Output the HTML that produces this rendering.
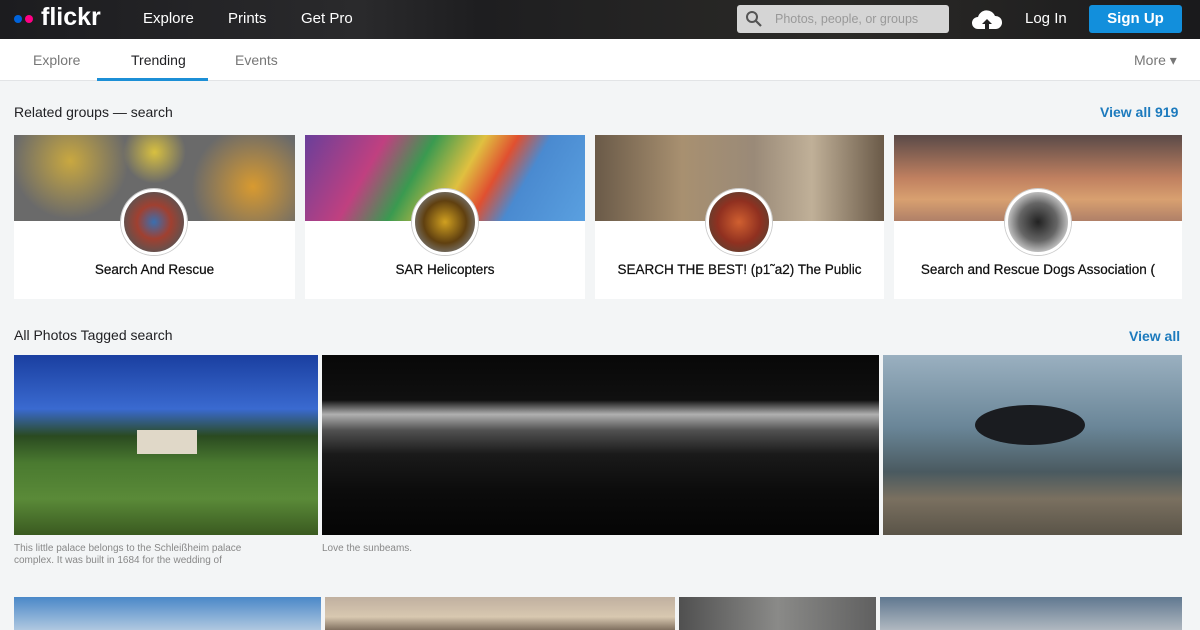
<!DOCTYPE html>
<html><head><meta charset="utf-8"><style>
*{margin:0;padding:0;box-sizing:border-box}
body{width:1200px;height:630px;overflow:hidden;background:#f3f5f6;font-family:"Liberation Sans",sans-serif;position:relative}
.a{position:absolute}
.hdr{left:0;top:0;width:1200px;height:39px;background:linear-gradient(90deg,#1c1c1f 0%,#2a2a2c 30%,#1e1e20 40%,#2b2a27 70%,#1a1a1c 100%)}
.hl{color:#fff;font-size:15px;top:10px}
.sub{left:0;top:39px;width:1200px;height:42px;background:#fff;border-bottom:1px solid #e2e4e6}
.st{font-size:14px;color:#777;top:52px}
.card{top:135px;height:164px;background:#fff}
.card .im{position:absolute;left:0;top:0;right:0;height:86px}
.av{position:absolute;top:54px;width:66px;height:66px;border-radius:50%;border:3px solid #fff;box-shadow:0 0 0 1px #ccc}
.ct{position:absolute;top:127px;left:0;right:0;text-align:center;font-size:13.5px;color:#111;white-space:nowrap;overflow:hidden;-webkit-text-stroke:0.25px #111}
.h2{font-size:14px;color:#212124}
.va{font-size:14px;color:#1c7abd;font-weight:bold}
.cap{font-size:10px;color:#888;line-height:12px}
</style></head><body>
<div class="a hdr"></div>
<div class="a" style="left:14px;top:15px;width:8px;height:8px;border-radius:50%;background:#0063dc"></div>
<div class="a" style="left:25px;top:15px;width:8px;height:8px;border-radius:50%;background:#ff0084"></div>
<div class="a" style="left:41px;top:3px;color:#fff;font-size:25px;font-weight:bold;letter-spacing:0px">flickr</div>
<div class="a hl" style="left:143px">Explore</div>
<div class="a hl" style="left:228px">Prints</div>
<div class="a hl" style="left:301px">Get Pro</div>
<div class="a" style="left:737px;top:5px;width:212px;height:28px;background:#d5d5d5;border-radius:3px"></div>
<svg class="a" style="left:745px;top:10px" width="18" height="18" viewBox="0 0 18 18"><circle cx="7" cy="7" r="5" fill="none" stroke="#555" stroke-width="2"/><path d="M11 11l5 5" stroke="#555" stroke-width="2.2"/></svg>
<div class="a" style="left:775px;top:12px;font-size:12.5px;color:#999">Photos, people, or groups</div>
<svg class="a" style="left:971px;top:8px" width="32" height="22" viewBox="0 0 32 22"><path d="M7 21a6 6 0 0 1 0-12 9 9 0 0 1 17-1 6.5 6.5 0 0 1 1 13z" fill="#fff"/><path d="M16 11l-5 5h3v5h4v-5h3z" fill="#222"/></svg>
<div class="a hl" style="left:1025px">Log In</div>
<div class="a" style="left:1089px;top:5px;width:93px;height:28px;background:#128fdc;border-radius:3px;color:#fff;font-weight:bold;font-size:15px;text-align:center;line-height:28px">Sign Up</div>
<div class="a sub"></div>
<div class="a st" style="left:33px">Explore</div>
<div class="a st" style="left:131px;color:#212124">Trending</div>
<div class="a" style="left:97px;top:78px;width:111px;height:3px;background:#1c8fd6"></div>
<div class="a st" style="left:235px">Events</div>
<div class="a st" style="left:1134px">More ▾</div>
<div class="a h2" style="left:14px;top:104px">Related groups — search</div>
<div class="a va" style="left:1100px;top:104px">View all 919</div>

<div class="a card" style="left:14px;width:281px"><div class="im" style="background:radial-gradient(circle at 20% 30%,#c9a840 0,#c9a84000 25%),radial-gradient(circle at 85% 60%,#d89a30 0,#d89a3000 25%),radial-gradient(circle at 50% 20%,#d8c040 0,transparent 20%),#6a6a6a"></div><div class="av" style="left:107px;background:radial-gradient(circle,#3a6fb0 0,#a04030 40%,#555 80%)"></div><div class="ct">Search And Rescue</div></div>
<div class="a card" style="left:305px;width:280px"><div class="im" style="background:linear-gradient(120deg,#6a3f9a 0,#c04080 25%,#3a9a50 40%,#e0c040 55%,#e05030 65%,#4a8ad0 75%,#5aa0e0 100%)"></div><div class="av" style="left:107px;background:radial-gradient(circle,#d0a020 0,#604010 50%,#777 80%)"></div><div class="ct">SAR Helicopters</div></div>
<div class="a card" style="left:595px;width:289px"><div class="im" style="background:linear-gradient(90deg,#6a5a48 0,#a89070 30%,#9a8a78 55%,#c0b098 75%,#6a5a48 100%)"></div><div class="av" style="left:111px;background:radial-gradient(circle,#d06030 0,#903020 50%,#604030 80%)"></div><div class="ct">SEARCH THE BEST! (p1˜a2) The Public</div></div>
<div class="a card" style="left:894px;width:288px"><div class="im" style="background:linear-gradient(180deg,#5a4a48 0,#c08060 50%,#d8a070 75%,#b08068 100%)"></div><div class="av" style="left:111px;background:radial-gradient(circle,#222 0,#666 45%,#ddd 80%)"></div><div class="ct">Search and Rescue Dogs Association (</div></div>

<div class="a h2" style="left:14px;top:327px">All Photos Tagged search</div>
<div class="a va" style="left:1129px;top:328px">View all</div>
<div class="a" style="left:14px;top:355px;width:304px;height:180px;background:linear-gradient(180deg,#1a3fa0 0,#3a6ad0 30%,#2a4a20 45%,#4a7a30 60%,#5a8a38 80%,#3a5a20 100%)"></div>
<div class="a" style="left:137px;top:430px;width:60px;height:24px;background:#e0d8c8"></div>
<div class="a" style="left:322px;top:355px;width:557px;height:180px;background:linear-gradient(180deg,#080808 0,#101010 25%,#b0b0b0 33%,#505050 42%,#1a1a1a 55%,#0c0c0c 75%,#050505 100%)"></div>
<div class="a" style="left:883px;top:355px;width:299px;height:180px;background:linear-gradient(180deg,#9ab0c0 0,#6a8698 40%,#4a5a60 65%,#7a7060 80%,#5a5448 100%)"></div>
<div class="a" style="left:975px;top:405px;width:110px;height:40px;border-radius:50%;background:#1a1c20"></div>
<div class="a cap" style="left:14px;top:543px;width:265px">This little palace belongs to the Schleißheim palace complex. It was built in 1684 for the wedding of</div>
<div class="a cap" style="left:322px;top:543px">Love the sunbeams.</div>
<div class="a" style="left:14px;top:597px;width:307px;height:33px;background:linear-gradient(180deg,#4a88c8,#b0c8e0)"></div>
<div class="a" style="left:325px;top:597px;width:350px;height:33px;background:linear-gradient(180deg,#c0b0a0,#d8c8b0 60%,#807060)"></div>
<div class="a" style="left:679px;top:597px;width:197px;height:33px;background:linear-gradient(90deg,#505050,#8a8a88,#606060)"></div>
<div class="a" style="left:880px;top:597px;width:302px;height:33px;background:linear-gradient(180deg,#607890,#b0b8c0)"></div>
</body></html>
